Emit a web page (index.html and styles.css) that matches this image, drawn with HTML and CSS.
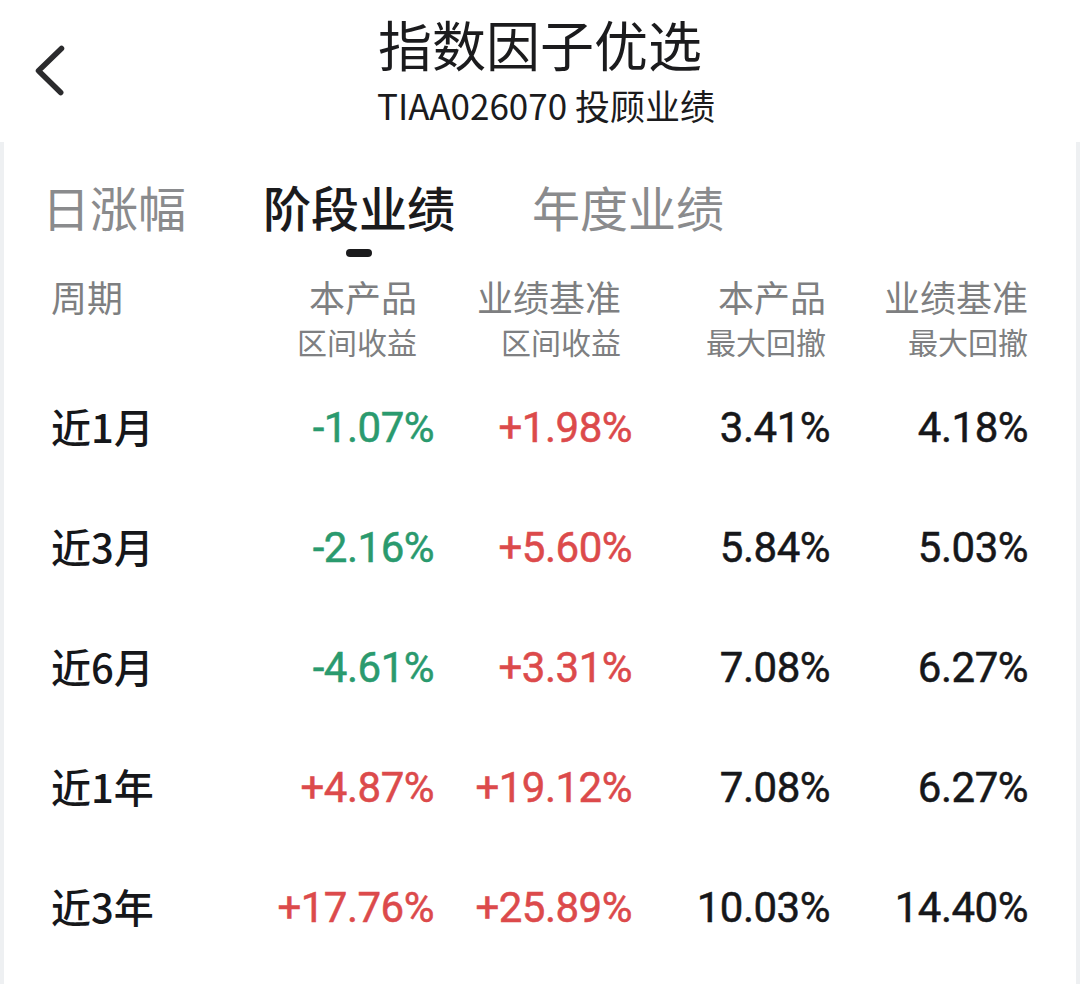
FILE: index.html
```html
<!DOCTYPE html>
<html lang="zh-CN">
<head>
<meta charset="utf-8">
<title>指数因子优选</title>
<link rel="stylesheet" href="styles.css">
</head>
<body>
<header class="topbar">
  <div class="back">
    <svg width="40" height="60" viewBox="0 0 40 60" aria-hidden="true">
      <polyline points="31.5,8.5 8.5,30.7 30.7,52.5" fill="none" stroke="#2b2b2d" stroke-width="5.5" stroke-linecap="round" stroke-linejoin="round"/>
    </svg>
  </div>
  <div class="titles">
    <div class="title">指数因子优选</div>
    <div class="subtitle">TIAA026070 投顾业绩</div>
  </div>
  <div class="spacer"></div>
</header>

<main class="card">
  <nav class="tabs">
    <div class="tab">日涨幅</div>
    <div class="tab active">阶段业绩<span class="indicator"></span></div>
    <div class="tab">年度业绩</div>
  </nav>

  <div class="grid head">
    <div class="hcell period-h"><span class="lbl">周期</span></div>
    <div class="hcell h1"><span class="lbl">本产品</span><span class="sub">区间收益</span></div>
    <div class="hcell h2"><span class="lbl">业绩基准</span><span class="sub">区间收益</span></div>
    <div class="hcell h3"><span class="lbl">本产品</span><span class="sub">最大回撤</span></div>
    <div class="hcell h4"><span class="lbl">业绩基准</span><span class="sub">最大回撤</span></div>
  </div>

  <div class="grid row">
    <div class="period">近1月</div>
    <div class="num down">-1.07%</div>
    <div class="num up">+1.98%</div>
    <div class="num">3.41%</div>
    <div class="num">4.18%</div>
  </div>
  <div class="grid row">
    <div class="period">近3月</div>
    <div class="num down">-2.16%</div>
    <div class="num up">+5.60%</div>
    <div class="num">5.84%</div>
    <div class="num">5.03%</div>
  </div>
  <div class="grid row">
    <div class="period">近6月</div>
    <div class="num down">-4.61%</div>
    <div class="num up">+3.31%</div>
    <div class="num">7.08%</div>
    <div class="num">6.27%</div>
  </div>
  <div class="grid row">
    <div class="period">近1年</div>
    <div class="num up">+4.87%</div>
    <div class="num up">+19.12%</div>
    <div class="num">7.08%</div>
    <div class="num">6.27%</div>
  </div>
  <div class="grid row">
    <div class="period">近3年</div>
    <div class="num up">+17.76%</div>
    <div class="num up">+25.89%</div>
    <div class="num">10.03%</div>
    <div class="num">14.40%</div>
  </div>
</main>
</body>
</html>
```

FILE: styles.css
```css
* { box-sizing: border-box; }

html, body {
  margin: 0;
  padding: 0;
}

body {
  width: 1080px;
  min-height: 984px;
  background: #eef0f2;
  font-family: "Noto Sans CJK SC", "Noto Sans", sans-serif;
  color: #1b1b1d;
  overflow: hidden;
}

.topbar {
  height: 142px;
  background: #ffffff;
  display: grid;
  grid-template-columns: 1fr auto 1fr;
  align-items: center;
}

.back {
  display: flex;
  align-items: center;
  padding-left: 30px;
  height: 142px;
}

.back svg { display: block; margin-top: -2px; }

.titles {
  display: flex;
  flex-direction: column;
  align-items: center;
  padding-top: 13px;
  align-self: start;
}

.title {
  font-size: 54px;
  line-height: 62px;
  font-weight: 400;
  color: #1b1b1d;
}

.subtitle {
  margin-top: 8px;
  font-size: 35px;
  line-height: 44px;
  color: #1b1b1d;
  padding-left: 12px;
}

.card {
  background: #ffffff;
  margin: 0 4px;
  min-height: 842px;
  padding: 34px 48px 0 38px;
}

.tabs {
  display: flex;
  gap: 77px;
  align-items: flex-start;
  height: 97px;
}

.tab {
  font-size: 48px;
  line-height: 60px;
  color: #8a8b8d;
  display: flex;
  flex-direction: column;
  align-items: center;
}

.tab.active {
  color: #1b1b1d;
  font-weight: 500;
}

.indicator {
  display: block;
  width: 26px;
  height: 8px;
  border-radius: 4px;
  background: #1b1b1d;
  margin-top: 13px;
}

.grid {
  display: grid;
  grid-template-columns: 1fr 198px 198px 198px 198px;
  padding-left: 9px;
}

.head {
  height: 95px;
}

.hcell {
  display: flex;
  flex-direction: column;
  align-items: flex-end;
  color: #7e7f81;
}

.period-h { align-items: flex-start; }

.lbl {
  font-size: 36px;
  line-height: 46px;
}

.sub {
  font-size: 30px;
  line-height: 44px;
}

.h1 { padding-right: 17px; }
.h2 { padding-right: 11px; }
.h3 { padding-right: 4px; }
.h4 { padding-right: 0; }

.row {
  height: 120px;
  align-items: center;
}

.period {
  font-size: 40px;
  font-weight: 500;
  color: #16171a;
  line-height: 120px;
  margin-top: -4px;
}

.num {
  text-align: right;
  font-family: Roboto, "Liberation Sans", sans-serif;
  font-size: 42px;
  font-weight: 400;
  -webkit-text-stroke: 0.5px currentColor;
  letter-spacing: -0.5px;
  line-height: 120px;
  color: #16171a;
}

.num.down { color: #2a9a6e; }
.num.up { color: #dc4a4b; }
```
